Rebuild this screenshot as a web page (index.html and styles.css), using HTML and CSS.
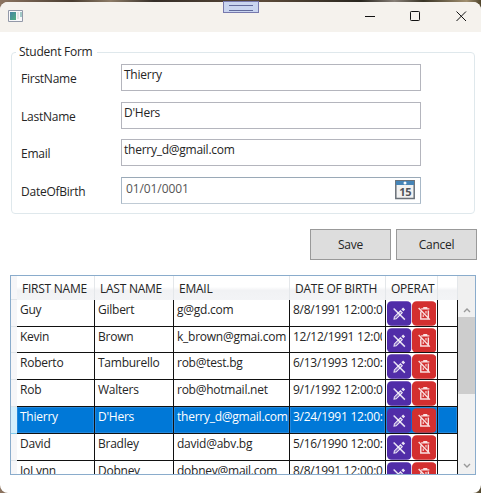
FILE: index.html
```html
<!DOCTYPE html>
<html lang="en">
<head>
<meta charset="utf-8">
<title>Student Form</title>
<link rel="stylesheet" href="styles.css">
</head>
<body>
<svg width="0" height="0" class="defs">
  <symbol id="edit" viewBox="0 0 24 24"><rect width="24" height="24" rx="4.5" fill="#512da8"/><g fill="none" stroke="#fff" stroke-opacity=".88" stroke-width="1.4"><path d="M6.500 7l11 11"/><path d="M6.800 17.600l.4-2.200 6-6 1.800 1.800-6 6z" fill="#fff" fill-opacity=".3" stroke-width="1"/><path d="M15 8.800l1.800-1.800" stroke-width="2.800"/></g></symbol>
  <symbol id="trash" viewBox="0 0 24 24"><rect width="24" height="24" rx="4.500" fill="#d32f2f"/><g fill="none" stroke="#fff" stroke-opacity=".85" stroke-width="1.400"><path d="M9 7.500h8M11 6.400h4M8.600 10v7.300h7.400V9M6.500 6.500l11 11.500"/><path d="M13.700 9.500v2.500M11 13v2.500" stroke-width="1.100"/></g></symbol>
</svg>
<div class="desktop">
<div class="window">
  <header class="titlebar">
    <svg class="app" width="15" height="12" viewBox="0 0 15 12"><defs><linearGradient id="g" x2="1" y2="1"><stop stop-color="#4384a5"/><stop offset="1" stop-color="#4fae80"/></linearGradient></defs><path d="M.5.5h14v11H.5z" fill="#f8f8fa" stroke="#9399a8"/><path d="M2 2h6v8H2z" fill="url(#g)"/><path d="M9 2h2v7H9z" fill="#e0e4e4"/><path d="M12.500 2h1v5h-1z" fill="#4c9a91"/></svg>
    <svg class="controls" width="108" height="14" viewBox="0 0 108 14" fill="none" stroke="#111" stroke-width="1"><path d="M0 6.500h10"/><rect x="45.500" y="1.500" width="9" height="9" rx=".8"/><path d="M91.500 1.500l9.500 9.500M101 1.500L91.500 11"/></svg>
  </header>
  <main>
    <fieldset class="form">
      <legend>Student Form</legend>
      <div class="field"><label>FirstName</label><div class="input">Thierry</div></div>
      <div class="field"><label>LastName</label><div class="input">D'Hers</div></div>
      <div class="field"><label>Email</label><div class="input">therry_d@gmail.com</div></div>
      <div class="field"><label>DateOfBirth</label><div class="input date"><span>01/01/0001</span>
        <svg width="20" height="20" viewBox="0 0 20 20"><path d="M.8.800h18.400v17.800H.8z" fill="#f2f2f2" stroke="#697078" stroke-width="1.500"/><path d="M1 1h18v4H1z" fill="#4584b7"/><circle cx="10" cy="3" r="1.500" fill="#fff"/><text x="10.300" y="15.700" text-anchor="middle" class="day">15</text></svg></div></div>
    </fieldset>
    <div class="actions"><button>Save</button><button>Cancel</button></div>
    <section class="grid">
      <div class="table" id="table">
        <div class="row head"><i></i><b>FIRST NAME</b><b>LAST NAME</b><b>EMAIL</b><b>DATE OF BIRTH</b><b>OPERAT</b><b></b></div>
        <div class="row"><i></i><span>Guy</span><span>Gilbert</span><span>g@gd.com</span><span>8/8/1991 12:00:0</span><span class="ops"><svg><use href="#edit"/></svg><svg><use href="#trash"/></svg></span><span></span></div>
        <div class="row short"><i></i><span>Kevin</span><span>Brown</span><span>k_brown@gmai.com</span><span><em>12/12/1991 12:00</em></span><span class="ops"><svg><use href="#edit"/></svg><svg><use href="#trash"/></svg></span><span></span></div>
        <div class="row"><i></i><span>Roberto</span><span>Tamburello</span><span>rob@test.bg</span><span>6/13/1993 12:00:</span><span class="ops"><svg><use href="#edit"/></svg><svg><use href="#trash"/></svg></span><span></span></div>
        <div class="row"><i></i><span>Rob</span><span>Walters</span><span>rob@hotmail.net</span><span>9/1/1992 12:00:0</span><span class="ops"><svg><use href="#edit"/></svg><svg><use href="#trash"/></svg></span><span></span></div>
        <div class="row selected"><i></i><span>Thierry</span><span>D'Hers</span><span>therry_d@gmail.com</span><span>3/24/1991 12:00:</span><span class="ops"><svg><use href="#edit"/></svg><svg><use href="#trash"/></svg></span><span></span></div>
        <div class="row"><i></i><span>David</span><span>Bradley</span><span>david@abv.bg</span><span>5/16/1990 12:00:</span><span class="ops"><svg><use href="#edit"/></svg><svg><use href="#trash"/></svg></span><span></span></div>
        <div class="row"><i></i><span>JoLynn</span><span>Dobney</span><span>dobney@mail.com</span><span>8/8/1991 12:00:0</span><span class="ops"><svg><use href="#edit"/></svg><svg><use href="#trash"/></svg></span><span></span></div>
      </div>
      <div class="scroll"><div class="arrow top"><svg width="8" height="6" viewBox="0 0 8 6"><path d="M1 5l3-3 3 3"/></svg></div><div class="thumb"></div><div class="arrow"><svg width="8" height="6" viewBox="0 0 8 6"><path d="M1 1l3 3 3-3"/></svg></div></div>
    </section>
  </main>
</div>
<div class="handle"></div>
</div>
</body>
</html>
```
FILE: styles.css
```css
* { box-sizing: border-box; }
body { margin: 0; overflow: hidden; font: 12px/16px "Open Sans", "Noto Sans", sans-serif; letter-spacing: -.25px; color: #252525; }
.defs { position: absolute; }
.desktop { position: relative; height: 493px; padding-top: 2px; background: linear-gradient(90deg, #8c7460, #493d31 15%, #8d7c67 23%, #352e28 32%, #5b4a39 55%, #29261f 75%, #888078 82%, #393426 88%, #a29070 97%, #51462d); }
.window { height: 491px; background: #fff; border-radius: 8px; overflow: hidden; }
.titlebar { height: 30px; background: #f5f2ed; display: flex; justify-content: space-between; padding: 8px 8px 0; }
.handle { position: absolute; left: 223px; top: 1px; width: 36px; height: 12px; border: 1px solid #7779ad; background: #c9d5f0; }
.handle::after { content: ""; display: block; margin: 3px 5px; height: 4px; border: solid #626a9c; border-width: 1px 0; }
main { padding: 12px 0 0; }
.form { margin: 0 6px 0 11px; padding: 4px 0 0 9px; height: 170px; border: 1px solid #dfe8ec; border-radius: 4px; }
legend { margin-left: -5px; padding: 0 5px 0 3px; height: 16px; }
.field { display: flex; height: 37.500px; }
label { width: 100px; padding: 7px 0 0 0; }
.input { width: 300px; height: 27px; border: 1px solid #b4b5bd; padding: 2px; background: #fff; }
.date { border-color: #9aa9b7 #a8b8c7 #c0cbd5; display: flex; justify-content: space-between; padding: 2px 5px 0 4px; color: #555; }
.date span { padding-top: 1px; letter-spacing: -.1px; }
.day { font: bold 11px "Open Sans", sans-serif; fill: #50545a; }
.actions { display: flex; justify-content: flex-end; gap: 5px; padding: 15px 4px 0 0; }
button { width: 81px; height: 31px; border: 1px solid #999; background: #ddd; font: inherit; letter-spacing: inherit; color: inherit; padding: 1px 0 0; }
.grid { margin: 15px 0 0 10px; width: 466px; height: 200px; display: flex; border: 1px solid #8aaccc; }
.table { width: 447px; overflow: hidden; }
.row { display: grid; grid-template-columns: 6px 78px 79px 116px 96px 52px 20px; height: 27px; white-space: nowrap; }
.row.short { height: 26px; }
.row span { border-right: 1px solid #111; border-bottom: 1px solid #111; padding: 2px 0 0 3px; overflow: hidden; }
.row em { display: block; font-style: normal; overflow: hidden; margin-right: 3px; }
.row i { background: #f6f6f8; border-bottom: 1px solid #dfe4e8; }
.head { height: 24px; background: linear-gradient(#fff 45%, #f1f2f4 60%, #f3f4f6); }
.head b { font-weight: 400; border-right: 1px solid #e4e7ea; padding: 5px 0 0 5px; overflow: hidden; }
.row .ops { display: flex; padding: 1px 0 0 1px; }
.ops svg { width: 24.500px; height: 25px; flex: none; }
.selected { color: #fff; background: #0078d7; }
.selected i { background: #d5effc; border-color: #82cbed; }
.selected span { box-shadow: inset 0 0 0 1px #2488dc; }
.scroll { width: 17px; background: #f0f0f0; display: flex; flex-direction: column; }
.arrow { height: 17px; display: flex; align-items: center; justify-content: center; }
.arrow.top { height: 41px; padding-top: 26px; }
.arrow path { fill: none; stroke: #999; stroke-width: 1.400; }
.thumb { height: 77px; background: #cdcdcd; margin-bottom: auto; }
```
